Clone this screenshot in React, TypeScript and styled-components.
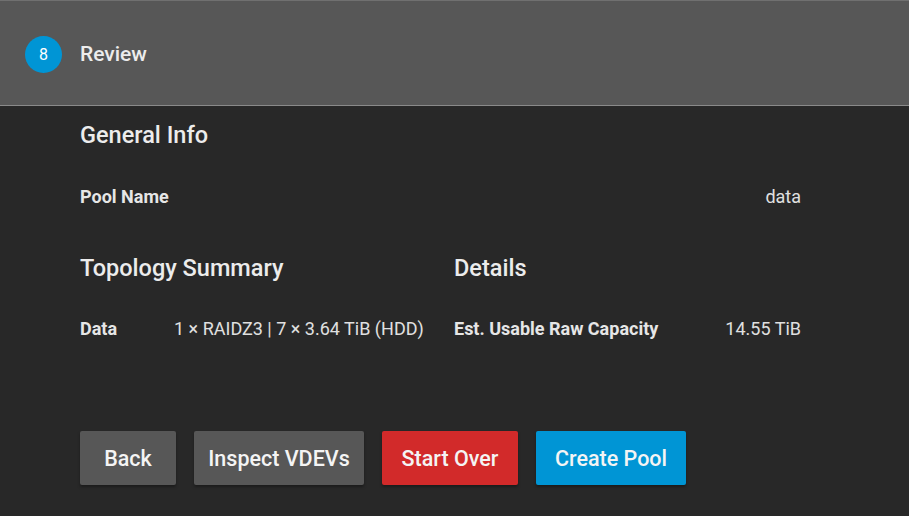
import { createGlobalStyle, styled } from "styled-components";

const GlobalStyle = createGlobalStyle`
  html, body {
    margin: 0;
    padding: 0;
    background: #282828;
    font-family: Roboto, "Noto Sans", Arial, sans-serif;
    color: #e6e6e6;
  }
`;

const Page = styled.div`
  width: 909px;
  height: 516px;
  background: #282828;
  overflow: hidden;
`;

const StepHeader = styled.header`
  height: 104px;
  background: #575757;
  border-top: 1px solid #707070;
  border-bottom: 1px solid #8a8a8a;
  display: flex;
  align-items: center;
  gap: 18px;
  padding: 2px 0 0 25px;
  box-sizing: content-box;
  height: 102px;
`;

const StepBadge = styled.span`
  width: 37px;
  height: 37px;
  border-radius: 50%;
  background: #0095d5;
  color: #fff;
  font-size: 16px;
  display: flex;
  align-items: center;
  justify-content: center;
`;

const StepLabel = styled.span`
  font-size: 21px;
  font-weight: 500;
  color: #ececec;
`;

const Body = styled.div`
  padding: 11px 108px 0 80px;
`;

const SectionTitle = styled.h2`
  margin: 0;
  font-size: 23.5px;
  font-weight: 500;
  color: #ececec;
  line-height: 36px;
`;

const Row = styled.div`
  display: flex;
  justify-content: space-between;
  align-items: center;
  height: 30px;
  margin-top: 28px;
  font-size: 18px;
`;

const Label = styled.span`
  font-weight: 700;
  color: #e6e6e6;
`;

const Value = styled.span`
  color: #e0e0e0;
`;

const Columns = styled.div`
  display: grid;
  grid-template-columns: 374px 1fr;
  margin-top: 39px;
`;

const Column = styled.div``;

const ValueRow = styled.div<{ $labelWidth?: number }>`
  display: flex;
  align-items: center;
  justify-content: ${(p) => (p.$labelWidth ? "flex-start" : "space-between")};
  height: 30px;
  margin-top: 27px;
  font-size: 18px;

  & > ${Label} {
    width: ${(p) => (p.$labelWidth ? `${p.$labelWidth}px` : "auto")};
  }
`;

const Actions = styled.div`
  display: flex;
  gap: 18px;
  margin-top: 88px;
`;

const tones = {
  grey: "#575757",
  red: "#d22a2a",
  blue: "#0095d5",
};

const Button = styled.button<{ $tone: keyof typeof tones; $width: number }>`
  width: ${(p) => p.$width}px;
  height: 54px;
  padding: 0;
  border: none;
  border-radius: 2px;
  font-family: Roboto, "Noto Sans", Arial, sans-serif;
  font-size: 21.5px;
  font-weight: 500;
  color: #f4f4f4;
  background: ${(p) => tones[p.$tone]};
  box-shadow: 0 2px 3px rgba(0, 0, 0, 0.35);
`;

export default function App() {
  return (
    <Page>
      <GlobalStyle />
      <StepHeader>
        <StepBadge>8</StepBadge>
        <StepLabel>Review</StepLabel>
      </StepHeader>
      <Body>
        <SectionTitle>General Info</SectionTitle>
        <Row>
          <Label>Pool Name</Label>
          <Value>data</Value>
        </Row>
        <Columns>
          <Column>
            <SectionTitle>Topology Summary</SectionTitle>
            <ValueRow $labelWidth={94}>
              <Label>Data</Label>
              <Value>1 × RAIDZ3 | 7 × 3.64 TiB (HDD)</Value>
            </ValueRow>
          </Column>
          <Column>
            <SectionTitle>Details</SectionTitle>
            <ValueRow>
              <Label>Est. Usable Raw Capacity</Label>
              <Value>14.55 TiB</Value>
            </ValueRow>
          </Column>
        </Columns>
        <Actions>
          <Button $tone="grey" $width={96}>Back</Button>
          <Button $tone="grey" $width={170}>Inspect VDEVs</Button>
          <Button $tone="red" $width={136}>Start Over</Button>
          <Button $tone="blue" $width={150}>Create Pool</Button>
        </Actions>
      </Body>
    </Page>
  );
}
